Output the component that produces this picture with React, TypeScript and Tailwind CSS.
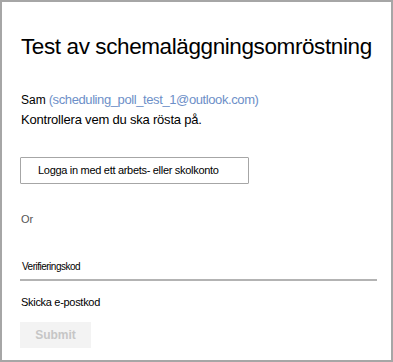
export default function App() {
  return (
    <div className="w-[393px] h-[362px] bg-white border-2 border-[#a6a6a6] font-['Liberation_Sans',Arial,sans-serif] text-black overflow-hidden">
      <div className="pl-[19px] pr-[14px] pt-[29px]">
        <h1 className="whitespace-nowrap text-[22.5px] leading-[32px] font-normal tracking-[-0.4px]">Test av schemaläggningsomröstning</h1>
        <div className="mt-[28px] flex items-end">
          <span className="text-[12px] leading-[18px]">Sam</span>
          <span className="ml-[3px] text-[13px] leading-[18px] tracking-[-0.4px] text-[#6d8fc8]">(scheduling_poll_test_1@outlook.com)</span>
        </div>
        <p className="mt-[2px] text-[13px] leading-[18px] tracking-[-0.2px]">Kontrollera vem du ska rösta på.</p>
        <button className="mt-[28px] ml-[-1px] w-[229px] h-[27px] border border-[#a6a6a6] rounded-[1px] text-left pl-[17px] text-[11px] tracking-[-0.3px] text-black">
          Logga in med ett arbets- eller skolkonto
        </button>
        <p className="mt-[28px] text-[11px] leading-[14px] text-[#555]">Or</p>
        <div className="mt-[34px] ml-[-1px] w-[357px] border-b-2 border-[#b3b3b3] pl-[2px] pb-[5px] text-[10px] leading-[14px] tracking-[-0.5px]">Verifieringskod</div>
        <p className="mt-[13px] text-[11px] leading-[16px] tracking-[-0.3px]">Skicka e-postkod</p>
        <button className="mt-[12px] ml-[-1px] w-[71px] h-[26px] bg-[#f3f3f3] text-[12px] font-bold text-[#c6c6c6]">Submit</button>
      </div>
    </div>
  );
}
